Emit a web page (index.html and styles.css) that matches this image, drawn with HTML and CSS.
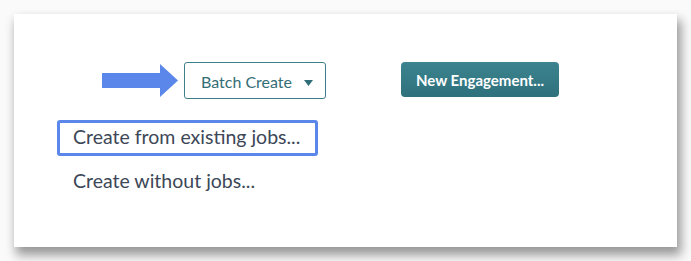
FILE: index.html
```html
<!DOCTYPE html>
<html lang="en">
<head>
<meta charset="utf-8">
<title>Batch Create</title>
<link rel="stylesheet" href="styles.css">
</head>
<body>
    <div class="card">
        <div class="toolbar">
            <svg class="pointer_arrow" width="76" height="33" viewBox="0 0 76 33">
                <polygon points="0,9 58,9 58,0 76,16.5 58,33 58,24 0,24" fill="#5a87e9"/>
            </svg>
            <button class="batch_btn" type="button">
                Batch Create
                <svg class="caret" width="9" height="6" viewBox="0 0 9 6">
                    <polygon points="0,0 9,0 4.5,6" fill="#2f6d78"/>
                </svg>
            </button>
            <button class="engage_btn" type="button">New Engagement...</button>
        </div>

        <ul class="batch_menu">
            <li class="menu_item selected">Create from existing jobs...</li>
            <li class="menu_item">Create without jobs...</li>
        </ul>
    </div>
</body>
</html>
```

FILE: styles.css
```css
html, body {
    margin: 0;
    background-color: #fafafa;
}

body {
    min-height: 261px;
    box-sizing: border-box;
    padding: 14px 14px 14px 14px;
    font-family: Lato, "Open Sans", sans-serif;
}

.card {
    width: 663px;
    height: 233px;
    box-sizing: border-box;
    background-color: white;
    box-shadow: 3px 7px 10px 1px rgba(0, 0, 0, 0.4);
    padding: 48px 0 0 43px;
}

.toolbar {
    display: flex;
    align-items: flex-start;
    padding-left: 45px;
}

.pointer_arrow {
    margin-top: 2px;
    display: block;
}

.batch_btn {
    margin-left: 6px;
    width: 142px;
    height: 37px;
    background-color: white;
    border: 1px solid #3f7f89;
    border-radius: 3px;
    color: #346d76;
    font-family: Lato, sans-serif;
    font-size: 16px;
    display: flex;
    align-items: center;
    justify-content: center;
    gap: 12px;
    padding: 2px 0 0 4px;
}

.caret {
    margin-top: 2px;
}

.engage_btn {
    margin-left: 75px;
    width: 158px;
    height: 35px;
    border: none;
    border-radius: 4px;
    background: linear-gradient(#3c8490, #2f717c);
    color: white;
    font-family: Lato, sans-serif;
    font-weight: bold;
    font-size: 15px;
    padding-top: 1px;
}

.batch_menu {
    list-style: none;
    margin: 21px 0 0 0;
    padding: 0;
}

.menu_item {
    width: 261px;
    height: 36px;
    box-sizing: border-box;
    padding: 2px 0 0 13px;
    color: #3d4757;
    font-size: 19.5px;
    line-height: 23px;
    border: 3px solid transparent;
}

.menu_item.selected {
    border-color: #5a87e9;
    border-radius: 3px;
}

.menu_item + .menu_item {
    margin-top: 8px;
}
```
